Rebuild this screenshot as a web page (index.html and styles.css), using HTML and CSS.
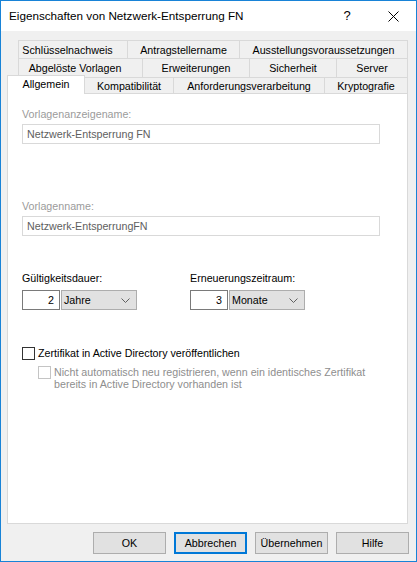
FILE: index.html
```html
<!DOCTYPE html>
<html lang="de">
<head>
<meta charset="utf-8">
<title>Eigenschaften von Netzwerk-Entsperrung FN</title>
<link rel="stylesheet" href="styles.css">
</head>
<body>
<div class="window">
  <div class="titlebar">
    <div class="title">Eigenschaften von Netzwerk-Entsperrung FN</div>
    <div class="tb-btn help">?</div>
    <div class="tb-btn close">
      <svg width="11" height="11" viewBox="0 0 11 11"><path d="M0.5 0.5 L10.5 10.5 M10.5 0.5 L0.5 10.5" stroke="#000" stroke-width="1" fill="none"/></svg>
    </div>
  </div>
  <div class="client">
    <div class="tabrow row1">
      <div class="tab lead">Schlüsselnachweis</div>
      <div class="tab">Antragstellername</div>
      <div class="tab">Ausstellungsvoraussetzungen</div>
    </div>
    <div class="tabrow row2">
      <div class="tab lead">Abgelöste Vorlagen</div>
      <div class="tab">Erweiterungen</div>
      <div class="tab">Sicherheit</div>
      <div class="tab">Server</div>
    </div>
    <div class="tabrow row3">
      <div class="tab selected">Allgemein</div>
      <div class="tab">Kompatibilität</div>
      <div class="tab">Anforderungsverarbeitung</div>
      <div class="tab">Kryptografie</div>
    </div>
    <div class="panel">
      <div class="label disabled first">Vorlagenanzeigename:</div>
      <div class="textbox">Netzwerk-Entsperrung FN</div>
      <div class="label disabled second">Vorlagenname:</div>
      <div class="textbox">Netzwerk-EntsperrungFN</div>

      <div class="periods">
        <div class="period">
          <div class="label">Gültigkeitsdauer:</div>
          <div class="spin-row">
            <div class="num">2</div>
            <div class="combo"><span>Jahre</span>
              <svg class="chev" width="9" height="5" viewBox="0 0 9 5"><path d="M0.5 0.5 L4.5 4.5 L8.5 0.5" stroke="#606060" stroke-width="1" fill="none"/></svg>
            </div>
          </div>
        </div>
        <div class="period">
          <div class="label">Erneuerungszeitraum:</div>
          <div class="spin-row">
            <div class="num">3</div>
            <div class="combo"><span>Monate</span>
              <svg class="chev" width="9" height="5" viewBox="0 0 9 5"><path d="M0.5 0.5 L4.5 4.5 L8.5 0.5" stroke="#606060" stroke-width="1" fill="none"/></svg>
            </div>
          </div>
        </div>
      </div>

      <div class="check-row main">
        <span class="box"></span>
        <span class="check-label">Zertifikat in Active Directory veröffentlichen</span>
      </div>
      <div class="check-row sub">
        <span class="box off"></span>
        <span class="check-label off">Nicht automatisch neu registrieren, wenn ein identisches Zertifikat<br>bereits in Active Directory vorhanden ist</span>
      </div>
    </div>
    <div class="buttons">
      <div class="btn">OK</div>
      <div class="btn default">Abbrechen</div>
      <div class="btn">Übernehmen</div>
      <div class="btn">Hilfe</div>
    </div>
  </div>
</div>
</body>
</html>
```
FILE: styles.css
```css
html, body {
  margin: 0;
  padding: 0;
  background: #ffffff;
}

.window {
  width: 417px;
  height: 562px;
  box-sizing: border-box;
  border: 1px solid #1883d7;
  background: #f0f0f0;
  display: flex;
  flex-direction: column;
  font-family: "Liberation Sans", Arial, sans-serif;
  font-size: 10.7px;
  color: #000;
}

.titlebar {
  height: 30px;
  flex: none;
  background: #ffffff;
  display: flex;
  align-items: center;
}

.title {
  flex: 1;
  padding-left: 8px;
  font-size: 11.7px;
  line-height: 30px;
  white-space: nowrap;
}

.tb-btn {
  width: 46px;
  height: 30px;
  display: flex;
  align-items: center;
  justify-content: center;
}

.help {
  font-size: 13px;
  padding-bottom: 1px;
  box-sizing: border-box;
}

.client {
  flex: 1;
  display: flex;
  flex-direction: column;
}

/* tabs */
.tabrow {
  display: grid;
}

.row1 {
  margin-top: 9px;
  margin-left: 17px;
  grid-template-columns: 110px 112px 168px;
}

.row2 {
  margin-left: 17px;
  grid-template-columns: 125px 107px 87px 71px;
}

.row3 {
  margin-top: -2px;
  margin-left: 6px;
  grid-template-columns: 78px 89px 151px 83px;
  align-items: end;
  position: relative;
  z-index: 1;
}

.tab {
  box-sizing: border-box;
  border-top: 1px solid #d9d9d9;
  border-right: 1px solid #d9d9d9;
  background: #f0f0f0;
  text-align: center;
  white-space: nowrap;
  line-height: 14px;
}

.tab:first-child {
  border-left: 1px solid #d9d9d9;
}

.tab.lead {
  padding-right: 11px;
}

.row1 .tab {
  height: 18px;
  padding-top: 2px;
}

.row2 .tab {
  height: 19px;
  padding-top: 2px;
}

.row3 .tab {
  height: 16px;
  padding-top: 1px;
}

.row3 .tab.selected {
  height: 19px;
  margin-bottom: -1px;
  background: #ffffff;
}

/* panel */
.panel {
  box-sizing: border-box;
  width: 401px;
  height: 431px;
  margin-left: 6px;
  border: 1px solid #d9d9d9;
  background: #ffffff;
  padding: 14px 0 0 14px;
}

.label {
  line-height: 13px;
  white-space: nowrap;
}

.label.disabled {
  color: #9b9b9b;
}

.label.second {
  margin-top: 56px;
}

.textbox {
  box-sizing: border-box;
  width: 358px;
  height: 20px;
  margin-top: 3px;
  border: 1px solid #d9d9d9;
  padding-left: 4px;
  line-height: 18px;
  color: #5e5e5e;
  white-space: nowrap;
}

.periods {
  margin-top: 36px;
  display: grid;
  grid-template-columns: 168px auto;
}

.spin-row {
  display: flex;
  gap: 1px;
  margin-top: 5px;
}

.num {
  box-sizing: border-box;
  width: 38px;
  height: 20px;
  border: 1px solid #7a7a7a;
  background: #ffffff;
  text-align: right;
  padding-right: 5px;
  line-height: 18px;
}

.combo {
  box-sizing: border-box;
  width: 76px;
  height: 20px;
  border: 1px solid #adadad;
  background: #e1e1e1;
  display: flex;
  align-items: center;
  justify-content: space-between;
  padding-left: 2px;
  padding-right: 6px;
  line-height: 18px;
}

.chev {
  display: block;
}

.check-row {
  display: flex;
  align-items: flex-start;
}

.check-row.main {
  margin-top: 37px;
  align-items: center;
}

.check-row.sub {
  margin-top: 6px;
  margin-left: 16px;
}

.box {
  box-sizing: border-box;
  width: 13px;
  height: 13px;
  flex: none;
  border: 1px solid #333333;
  background: #ffffff;
  margin-right: 3px;
}

.box.off {
  border-color: #c4c4c4;
}

.check-label {
  line-height: 13px;
  white-space: nowrap;
}

.check-label.off {
  color: #8e8e8e;
  line-height: 12px;
}

/* buttons */
.buttons {
  display: flex;
  justify-content: flex-end;
  gap: 8px;
  margin-top: 8px;
  margin-right: 7px;
}

.btn {
  box-sizing: border-box;
  width: 73px;
  height: 22px;
  border: 1px solid #adadad;
  background: #e1e1e1;
  text-align: center;
  line-height: 20px;
}

.btn.default {
  border: 2px solid #0078d7;
  line-height: 18px;
}
```
